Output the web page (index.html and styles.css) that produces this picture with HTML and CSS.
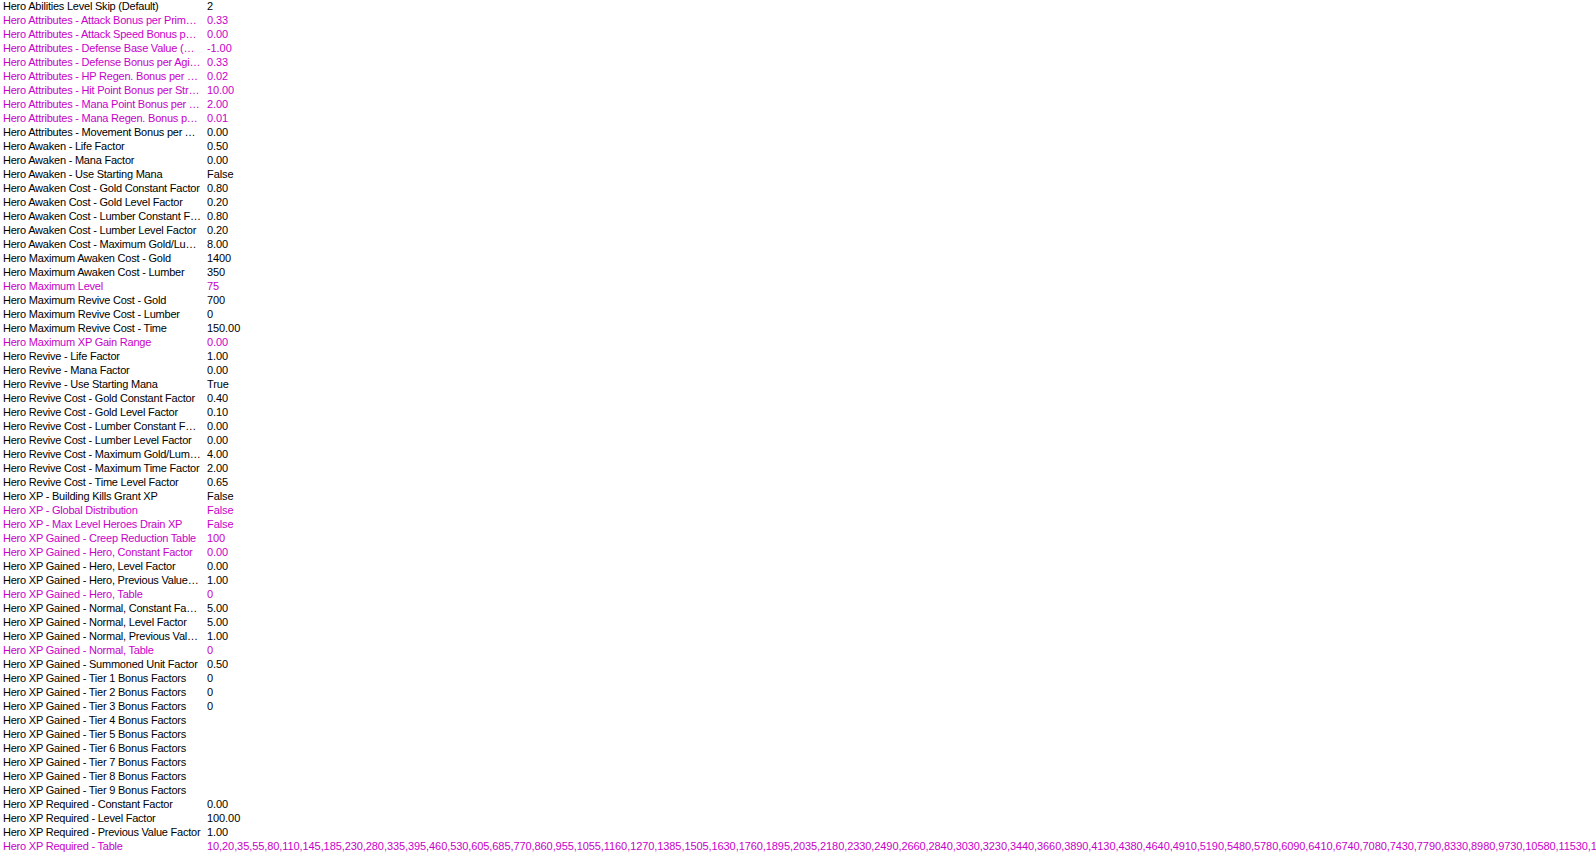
FILE: index.html
```html
<!DOCTYPE html>
<html>
<head>
<meta charset="utf-8">
<link rel="stylesheet" href="styles.css">
</head>
<body>
<div class="list">
<div class="row"><span class="name">Hero Abilities Level Skip (Default)</span><span class="val">2</span></div>
<div class="row mod"><span class="name">Hero Attributes - Attack Bonus per Primary Attribute Point</span><span class="val">0.33</span></div>
<div class="row mod"><span class="name">Hero Attributes - Attack Speed Bonus per Agility Point</span><span class="val">0.00</span></div>
<div class="row mod"><span class="name">Hero Attributes - Defense Base Value (Before Agility Bonus)</span><span class="val">-1.00</span></div>
<div class="row mod"><span class="name">Hero Attributes - Defense Bonus per Agility Point</span><span class="val">0.33</span></div>
<div class="row mod"><span class="name">Hero Attributes - HP Regen. Bonus per Strength Point</span><span class="val">0.02</span></div>
<div class="row mod"><span class="name">Hero Attributes - Hit Point Bonus per Strength Point</span><span class="val">10.00</span></div>
<div class="row mod"><span class="name">Hero Attributes - Mana Point Bonus per Intelligence Point</span><span class="val">2.00</span></div>
<div class="row mod"><span class="name">Hero Attributes - Mana Regen. Bonus per Intelligence Point</span><span class="val">0.01</span></div>
<div class="row"><span class="name">Hero Attributes - Movement Bonus per Agility Point</span><span class="val">0.00</span></div>
<div class="row"><span class="name">Hero Awaken - Life Factor</span><span class="val">0.50</span></div>
<div class="row"><span class="name">Hero Awaken - Mana Factor</span><span class="val">0.00</span></div>
<div class="row"><span class="name">Hero Awaken - Use Starting Mana</span><span class="val">False</span></div>
<div class="row"><span class="name">Hero Awaken Cost - Gold Constant Factor</span><span class="val">0.80</span></div>
<div class="row"><span class="name">Hero Awaken Cost - Gold Level Factor</span><span class="val">0.20</span></div>
<div class="row"><span class="name">Hero Awaken Cost - Lumber Constant Factor</span><span class="val">0.80</span></div>
<div class="row"><span class="name">Hero Awaken Cost - Lumber Level Factor</span><span class="val">0.20</span></div>
<div class="row"><span class="name">Hero Awaken Cost - Maximum Gold/Lumber Factor</span><span class="val">8.00</span></div>
<div class="row"><span class="name">Hero Maximum Awaken Cost - Gold</span><span class="val">1400</span></div>
<div class="row"><span class="name">Hero Maximum Awaken Cost - Lumber</span><span class="val">350</span></div>
<div class="row mod"><span class="name">Hero Maximum Level</span><span class="val">75</span></div>
<div class="row"><span class="name">Hero Maximum Revive Cost - Gold</span><span class="val">700</span></div>
<div class="row"><span class="name">Hero Maximum Revive Cost - Lumber</span><span class="val">0</span></div>
<div class="row"><span class="name">Hero Maximum Revive Cost - Time</span><span class="val">150.00</span></div>
<div class="row mod"><span class="name">Hero Maximum XP Gain Range</span><span class="val">0.00</span></div>
<div class="row"><span class="name">Hero Revive - Life Factor</span><span class="val">1.00</span></div>
<div class="row"><span class="name">Hero Revive - Mana Factor</span><span class="val">0.00</span></div>
<div class="row"><span class="name">Hero Revive - Use Starting Mana</span><span class="val">True</span></div>
<div class="row"><span class="name">Hero Revive Cost - Gold Constant Factor</span><span class="val">0.40</span></div>
<div class="row"><span class="name">Hero Revive Cost - Gold Level Factor</span><span class="val">0.10</span></div>
<div class="row"><span class="name">Hero Revive Cost - Lumber Constant Factor</span><span class="val">0.00</span></div>
<div class="row"><span class="name">Hero Revive Cost - Lumber Level Factor</span><span class="val">0.00</span></div>
<div class="row"><span class="name">Hero Revive Cost - Maximum Gold/Lumber Factor</span><span class="val">4.00</span></div>
<div class="row"><span class="name">Hero Revive Cost - Maximum Time Factor</span><span class="val">2.00</span></div>
<div class="row"><span class="name">Hero Revive Cost - Time Level Factor</span><span class="val">0.65</span></div>
<div class="row"><span class="name">Hero XP - Building Kills Grant XP</span><span class="val">False</span></div>
<div class="row mod"><span class="name">Hero XP - Global Distribution</span><span class="val">False</span></div>
<div class="row mod"><span class="name">Hero XP - Max Level Heroes Drain XP</span><span class="val">False</span></div>
<div class="row mod"><span class="name">Hero XP Gained - Creep Reduction Table</span><span class="val">100</span></div>
<div class="row mod"><span class="name">Hero XP Gained - Hero, Constant Factor</span><span class="val">0.00</span></div>
<div class="row"><span class="name">Hero XP Gained - Hero, Level Factor</span><span class="val">0.00</span></div>
<div class="row"><span class="name">Hero XP Gained - Hero, Previous Value Factor</span><span class="val">1.00</span></div>
<div class="row mod"><span class="name">Hero XP Gained - Hero, Table</span><span class="val">0</span></div>
<div class="row"><span class="name">Hero XP Gained - Normal, Constant Factor</span><span class="val">5.00</span></div>
<div class="row"><span class="name">Hero XP Gained - Normal, Level Factor</span><span class="val">5.00</span></div>
<div class="row"><span class="name">Hero XP Gained - Normal, Previous Value Factor</span><span class="val">1.00</span></div>
<div class="row mod"><span class="name">Hero XP Gained - Normal, Table</span><span class="val">0</span></div>
<div class="row"><span class="name">Hero XP Gained - Summoned Unit Factor</span><span class="val">0.50</span></div>
<div class="row"><span class="name">Hero XP Gained - Tier 1 Bonus Factors</span><span class="val">0</span></div>
<div class="row"><span class="name">Hero XP Gained - Tier 2 Bonus Factors</span><span class="val">0</span></div>
<div class="row"><span class="name">Hero XP Gained - Tier 3 Bonus Factors</span><span class="val">0</span></div>
<div class="row"><span class="name">Hero XP Gained - Tier 4 Bonus Factors</span><span class="val"></span></div>
<div class="row"><span class="name">Hero XP Gained - Tier 5 Bonus Factors</span><span class="val"></span></div>
<div class="row"><span class="name">Hero XP Gained - Tier 6 Bonus Factors</span><span class="val"></span></div>
<div class="row"><span class="name">Hero XP Gained - Tier 7 Bonus Factors</span><span class="val"></span></div>
<div class="row"><span class="name">Hero XP Gained - Tier 8 Bonus Factors</span><span class="val"></span></div>
<div class="row"><span class="name">Hero XP Gained - Tier 9 Bonus Factors</span><span class="val"></span></div>
<div class="row"><span class="name">Hero XP Required - Constant Factor</span><span class="val">0.00</span></div>
<div class="row"><span class="name">Hero XP Required - Level Factor</span><span class="val">100.00</span></div>
<div class="row"><span class="name">Hero XP Required - Previous Value Factor</span><span class="val">1.00</span></div>
<div class="row mod"><span class="name">Hero XP Required - Table</span><span class="val">10,20,35,55,80,110,145,185,230,280,335,395,460,530,605,685,770,860,955,1055,1160,1270,1385,1505,1630,1760,1895,2035,2180,2330,2490,2660,2840,3030,3230,3440,3660,3890,4130,4380,4640,4910,5190,5480,5780,6090,6410,6740,7080,7430,7790,8330,8980,9730,10580,11530,12580,13730,14980,16330</span></div>
</div>
</body>
</html>
```
FILE: styles.css
```css
html, body {
  margin: 0;
  padding: 0;
  background: #ffffff;
  overflow: hidden;
}
body {
  width: 1596px;
  height: 852px;
  font-family: "Liberation Sans", Arial, sans-serif;
  font-size: 11px;
  color: #000000;
}
.list {
  display: grid;
  grid-auto-rows: 14px;
  width: 1596px;
  height: 852px;
  overflow: hidden;
}
.row {
  display: grid;
  grid-template-columns: 204px minmax(0, 1fr);
  line-height: 13px;
  white-space: nowrap;
  overflow: hidden;
}
.name {
  padding-left: 3px;
  padding-right: 3px;
  letter-spacing: -0.22px;
  overflow: hidden;
  text-overflow: ellipsis;
}
.val {
  padding-left: 3px;
  letter-spacing: -0.08px;
  overflow: hidden;
}
.mod {
  color: #c800c8;
}
```
